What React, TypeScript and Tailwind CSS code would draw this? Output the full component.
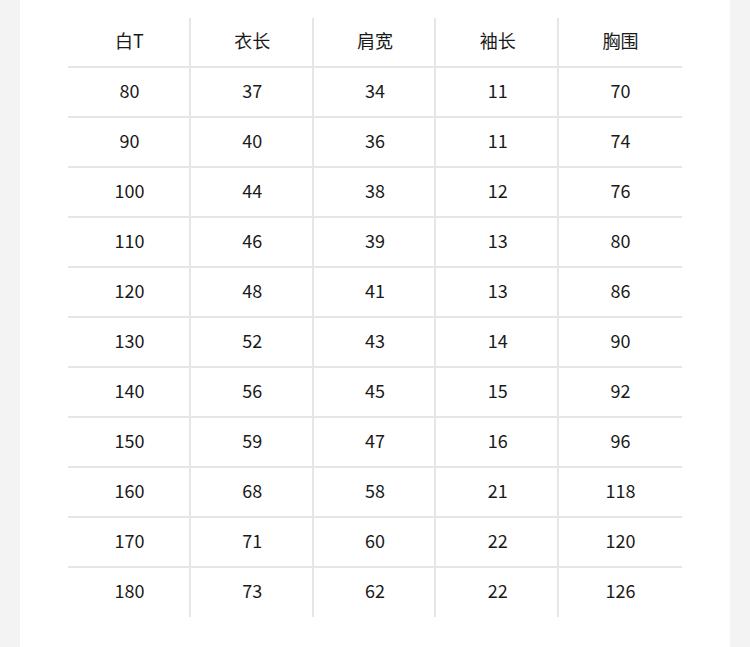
const header = ["白T", "衣长", "肩宽", "袖长", "胸围"];

const rows = [
    ["80", "37", "34", "11", "70"],
    ["90", "40", "36", "11", "74"],
    ["100", "44", "38", "12", "76"],
    ["110", "46", "39", "13", "80"],
    ["120", "48", "41", "13", "86"],
    ["130", "52", "43", "14", "90"],
    ["140", "56", "45", "15", "92"],
    ["150", "59", "47", "16", "96"],
    ["160", "68", "58", "21", "118"],
    ["170", "71", "60", "22", "120"],
    ["180", "73", "62", "22", "126"],
];

function Row({ cells, last }: { cells: string[]; last?: boolean }) {
    return (
        <div className={"grid grid-cols-5 " + (last ? "h-[49px]" : "h-[50px] border-b-2 border-[#e6e6e6]")}>
            {cells.map((c, i) => (
                <div
                    key={i}
                    className={
                        "flex items-center justify-center pb-[4px] " +
                        (i < 4 ? "pl-[2px] border-r-2 border-[#e6e6e6]" : "")
                    }
                >
                    {c}
                </div>
            ))}
        </div>
    );
}

export default function App() {
    return (
        <div
            className="min-h-[647px] bg-[#f3f3f3] px-[20px] text-[18px] text-[#1a1a1a]"
            style={{ fontFamily: '"Noto Sans CJK SC", "Noto Sans", sans-serif' }}
        >
            <div className="bg-white min-h-[647px] pt-[18px] px-[48px] pb-[30px]">
                <Row cells={header} />
                {rows.map((r, i) => (
                    <Row key={i} cells={r} last={i === rows.length - 1} />
                ))}
            </div>
        </div>
    );
}
